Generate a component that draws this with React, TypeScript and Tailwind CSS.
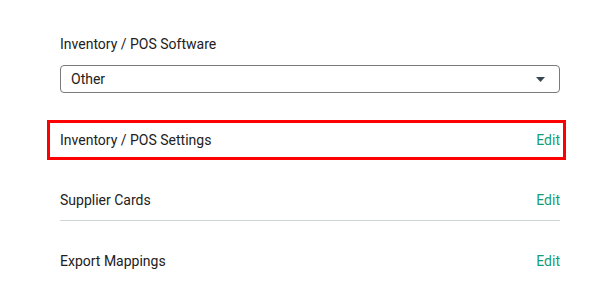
const rows = [
  { label: 'Supplier Cards', divider: true },
  { label: 'Export Mappings', divider: false },
];

export default function App() {
  return (
    <div className="min-h-screen bg-white font-['Roboto',sans-serif] text-sm text-[#212121]">
      <div className="w-[560px] pl-[60px] pt-[34px]">
        <div className="leading-5">Inventory / POS Software</div>
        <div className="mt-[11px] flex h-[28px] items-center justify-between rounded-[4px] border border-[#7a7a7a] pl-[10px] pr-[14px]">
          <span className="leading-5">Other</span>
          <svg width="9" height="5" viewBox="0 0 9 5" className="fill-[#37474f]">
            <path d="M0 0h9L4.5 5z" />
          </svg>
        </div>

        {/* highlighted row */}
        <div className="-ml-[13px] -mr-[6px] mt-[27px] flex h-[40px] items-center justify-between border-[3px] border-[#ff0000] pl-[10px] pr-[3px]">
          <span className="leading-5">Inventory / POS Settings</span>
          <button className="leading-5 text-[#159c76]">Edit</button>
        </div>

        {rows.map((row) => (
          <div
            key={row.label}
            className={`mt-[21px] flex h-[40px] items-center justify-between pb-[2px] ${row.divider ? 'border-b border-[#cfd6d8]' : ''}`}
          >
            <span className="leading-5">{row.label}</span>
            <button className="leading-5 text-[#159c76]">Edit</button>
          </div>
        ))}
      </div>
    </div>
  );
}
